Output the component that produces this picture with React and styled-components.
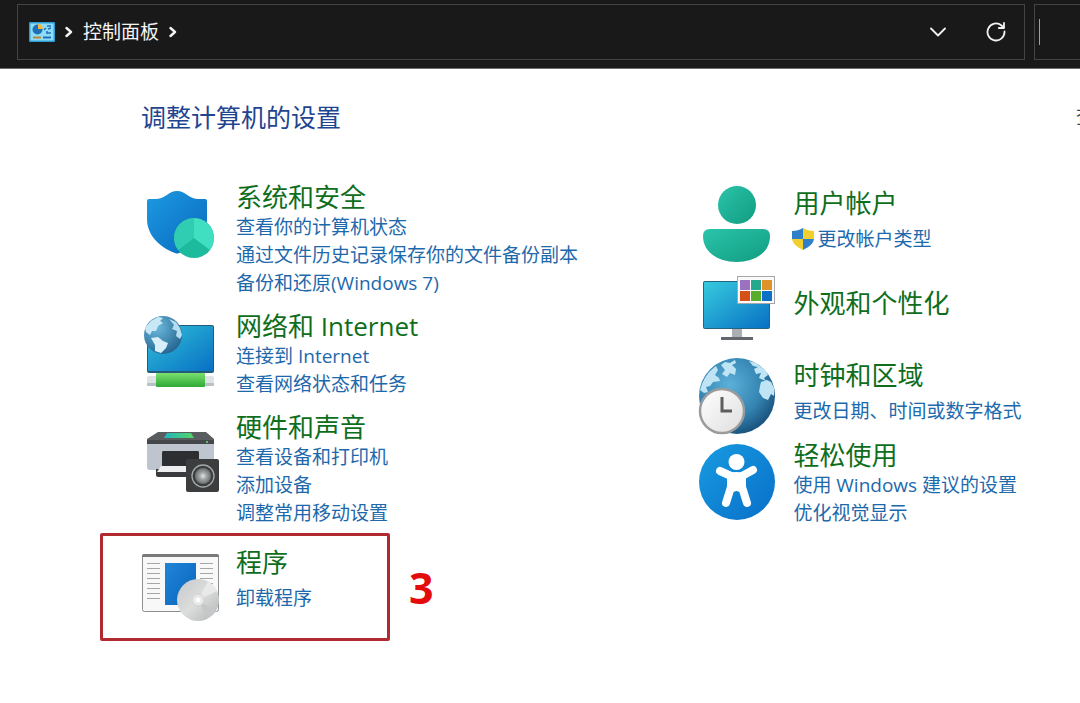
import styled, { createGlobalStyle } from "styled-components";

const App = () => {
  return (
    <>
      <GlobalStyle />
      <TopBar>
        <AddressBar aria-label="地址">
          <PanelIcon />
          <Crumb />
          <CrumbLink href="#panel">控制面板</CrumbLink>
          <Crumb />
          <Spacer />
          <IconButton aria-label="以前的位置">
            <svg width="16" height="16" viewBox="0 0 16 16">
              <path d="M1 4.500L8 11.500L15 4.500" {...whiteStroke} />
            </svg>
          </IconButton>
          <IconButton aria-label="刷新">
            <svg width="20" height="20" viewBox="0 0 20 20">
              <path d="M18.500 9.500A8.500 8.500 0 1 1 15.500 3.500L17.500 5.500" {...whiteStroke} />
              <path d="M18 1V6H12.800" {...whiteStroke} />
            </svg>
          </IconButton>
        </AddressBar>
        <SearchBox>
          <Caret />
          <SearchInput type="text" aria-label="搜索" />
        </SearchBox>
      </TopBar>
      <Main>
        <HeadingRow>
          <Heading>调整计算机的设置</Heading>
          <ViewBy>查看方式:</ViewBy>
        </HeadingRow>
        <Columns>
          <LeftColumn>
            <Category
              icon={<ShieldIcon />}
              title="系统和安全"
              links={[
                "查看你的计算机状态",
                "通过文件历史记录保存你的文件备份副本",
                "备份和还原(Windows 7)",
              ]}
            />
            <Category
              icon={<NetworkIcon />}
              title="网络和 Internet"
              links={["连接到 Internet", "查看网络状态和任务"]}
            />
            <Category
              icon={<PrinterIcon />}
              title="硬件和声音"
              links={["查看设备和打印机", "添加设备", "调整常用移动设置"]}
            />
            <Category icon={<ProgramsIcon />} title="程序" links={["卸载程序"]} $sparse>
              <Highlight />
              <StepNumber>3</StepNumber>
            </Category>
          </LeftColumn>
          <RightColumn>
            <Category
              icon={<UserIcon />}
              title="用户帐户"
              links={["更改帐户类型"]}
              linkIcon={<UacIcon />}
              $sparse
            />
            <Category icon={<DisplayIcon />} title="外观和个性化" links={[]} $sparse />
            <Category
              icon={<ClockIcon />}
              title="时钟和区域"
              links={["更改日期、时间或数字格式"]}
              $sparse
            />
            <Category
              icon={<AccessIcon />}
              title="轻松使用"
              links={["使用 Windows 建议的设置", "优化视觉显示"]}
            />
          </RightColumn>
        </Columns>
      </Main>
    </>
  );
};

export default App;

const Category = ({ icon, title, links, linkIcon, $sparse, children }) => {
  return (
    <CategoryRow>
      <IconCell>{icon}</IconCell>
      <CategoryText $sparse={$sparse}>
        <CategoryTitle>
          <TitleLink href="#category">{title}</TitleLink>
        </CategoryTitle>
        <TaskList $sparse={$sparse}>
          {links.map((text) => (
            <TaskItem key={text}>
              {linkIcon}
              <TaskLink href="#task">{text}</TaskLink>
            </TaskItem>
          ))}
        </TaskList>
      </CategoryText>
      {children}
    </CategoryRow>
  );
};

const whiteStroke = {
  fill: "none",
  stroke: "#f2f2f2",
  strokeWidth: 1.8,
  strokeLinecap: "round",
  strokeLinejoin: "round",
};

const Crumb = () => (
  <CrumbArrow width="8" height="12" viewBox="0 0 8 12" aria-hidden="true">
    <path d="M1.500 2L6 6L1.500 10" {...whiteStroke} strokeWidth="2.4" />
  </CrumbArrow>
);

const PanelIcon = () => (
  <svg width="26" height="20" viewBox="0 0 26 20" aria-hidden="true">
    <rect width="26" height="20" rx="1" fill="#2c9fd6" />
    <rect x="1.500" y="1.500" width="23" height="17" fill="#8fdcf8" />
    <circle cx="8.500" cy="7.500" r="5" fill="#1c70b8" />
    <path d="M9 7V2A5 5 0 0 1 14 7Z" fill="#f4b740" />
    <path d="M15 8L17 6M18 4H22M19 7L22 6M18 11H22M18 9V12" stroke="#1c70b8" strokeWidth="1.500" />
    <path d="M4 15.500H12" stroke="#b98a35" strokeWidth="2" />
    <path d="M14 15.500H22" stroke="#1c70b8" strokeWidth="2" />
  </svg>
);

const ShieldIcon = () => (
  <Picture viewBox="0 0 78 78">
    <defs>
      <linearGradient id="shield" x1="0" y1="0" x2="1" y2="1">
        <stop offset="0" stopColor="#1d9ae2" />
        <stop offset="1" stopColor="#0868bd" />
      </linearGradient>
    </defs>
    <path
      d="M36 6C45 6 47 14 58 14H64Q66 14 66 16V34C66 51 52 63 38 68Q36 69 34 68C20 63 6 51 6 34V16Q6 14 8 14H14C25 14 27 6 36 6Z"
      fill="url(#shield)"
    />
    <circle cx="53" cy="53" r="20" fill="#1cbb9d" />
    <path d="M53 53V33A20 20 0 0 0 37 65Z" fill="#31cdb2" />
    <path d="M53 53V33A20 20 0 0 1 69 65Z" fill="#40dfc2" />
  </Picture>
);

const NetworkIcon = () => (
  <Picture viewBox="0 0 78 78">
    <defs>
      <linearGradient id="netScreen" x1="0" y1="0" x2="1" y2="1">
        <stop offset="0" stopColor="#30c0d8" />
        <stop offset="1" stopColor="#0870c4" />
      </linearGradient>
      <radialGradient id="netGlobe" cx="0.35" cy="0.3" r="0.8">
        <stop offset="0" stopColor="#6bb9dd" />
        <stop offset="1" stopColor="#205f8a" />
      </radialGradient>
      <linearGradient id="cable" x1="0" y1="0" x2="0" y2="1">
        <stop offset="0" stopColor="#7be06e" />
        <stop offset="1" stopColor="#2fa936" />
      </linearGradient>
    </defs>
    <rect x="6" y="11" width="67" height="48" rx="2" fill="#245b7b" />
    <rect x="7" y="12" width="65" height="45" rx="1" fill="url(#netScreen)" />
    <rect x="6" y="62" width="67" height="10" rx="2" fill="#dfe3e6" />
    <rect x="6" y="69" width="67" height="3" rx="1" fill="#b9c0c6" />
    <rect x="15" y="59" width="49" height="14" rx="1" fill="url(#cable)" />
    <circle cx="22" cy="21" r="19" fill="url(#netGlobe)" />
    <path d="M5 18L4 14L10 7L17 3L22 4L19 7L22 9L17 12L15 17L11 17L9 21Z" fill="#c9e8f6" />
    <path d="M10 24L17 23L22 27L27 29L25 34L20 39L14 37L14 31Z" fill="#d8effa" />
    <path d="M28 5L35 8L39 14L41 21L39 25L35 22L36 17L31 15L33 11Z" fill="#b6dcef" />
  </Picture>
);

const PrinterIcon = () => (
  <Picture viewBox="0 0 78 78">
    <defs>
      <linearGradient id="printGlass" x1="0" y1="0" x2="1" y2="0">
        <stop offset="0" stopColor="#23b4be" />
        <stop offset="1" stopColor="#53d665" />
      </linearGradient>
      <radialGradient id="cone" cx="0.5" cy="0.5" r="0.5">
        <stop offset="0" stopColor="#e4e7e8" />
        <stop offset="0.4" stopColor="#a5a9aa" />
        <stop offset="1" stopColor="#6c6e6f" />
      </radialGradient>
    </defs>
    <path d="M6 27H73V52Q73 55 70 55H9Q6 55 6 52Z" fill="#bfc5ce" />
    <path d="M17 17H65L73 24V28H6V24Z" fill="#5a5d60" />
    <path d="M6 25H73V29H6Z" fill="#45484b" />
    <path d="M26 18H50L53 23H23Z" fill="url(#printGlass)" />
    <circle cx="66" cy="27" r="1" fill="#6ee080" />
    <path d="M22 36H57Q58 36 58 38V52H21V38Q21 36 22 36Z" fill="#2c2e31" />
    <path d="M15 54H46V62H17Q15 62 15 60Z" fill="#393b3e" />
    <path d="M20 51H47V57H16Z" fill="#eceef0" />
    <rect x="45" y="44" width="33" height="33" rx="2" fill="#3b3d3f" />
    <circle cx="62" cy="61" r="11" fill="#3b3d3f" stroke="#a4a8aa" strokeWidth="1.300" />
    <circle cx="62" cy="61" r="8" fill="url(#cone)" />
  </Picture>
);

const leftLines = [19, 24, 29, 34, 39, 44, 49, 54];

const ProgramsIcon = () => (
  <Picture viewBox="0 0 78 78">
    <defs>
      <linearGradient id="disc" x1="0" y1="0" x2="1" y2="1">
        <stop offset="0" stopColor="#c6c8c9" />
        <stop offset="0.5" stopColor="#dcdddd" />
        <stop offset="1" stopColor="#b2b4b5" />
      </linearGradient>
      <linearGradient id="page" x1="0" y1="0" x2="1" y2="1">
        <stop offset="0" stopColor="#2085d8" />
        <stop offset="1" stopColor="#0864bb" />
      </linearGradient>
    </defs>
    <rect x="1.500" y="10.500" width="76" height="57" rx="2" fill="#f8f8f8" stroke="#8d8f91" />
    <path d="M1 13V12Q1 10 3 10H76Q78 10 78 12V13Z" fill="#77797b" />
    {leftLines.map((y) => (
      <path key={y} d={`M6 ${y + 0.5}H19`} stroke="#a4a6a8" />
    ))}
    {leftLines.slice(0, 5).map((y) => (
      <path key={y} d={`M59 ${y + 0.5}H72`} stroke="#a4a6a8" />
    ))}
    <rect x="24" y="19" width="31" height="42" fill="url(#page)" />
    <circle cx="57" cy="56" r="21" fill="url(#disc)" />
    <path d="M57 56L67 37.500A21 21 0 0 1 76 47Z" fill="#e9e9e9" />
    <path d="M57 56L75 67A21 21 0 0 1 67 74Z" fill="#c6c7c8" />
    <circle cx="57" cy="56" r="6" fill="#e8e8e8" stroke="#d0d1d2" />
    <circle cx="57" cy="56" r="2.500" fill="#fff" />
  </Picture>
);

const UserIcon = () => (
  <Picture viewBox="0 0 78 78">
    <defs>
      <linearGradient id="user" x1="0" y1="0" x2="1" y2="1">
        <stop offset="0" stopColor="#2ac4ab" />
        <stop offset="1" stopColor="#119c80" />
      </linearGradient>
    </defs>
    <circle cx="39" cy="19" r="19" fill="url(#user)" />
    <path
      d="M12 43H65Q72 43 72 50C72 67 56 76 38.500 76C21 76 5 67 5 50Q5 43 12 43Z"
      fill="url(#user)"
    />
  </Picture>
);

const UacIcon = () => (
  <Shield width="24" height="24" viewBox="0 0 24 24" aria-hidden="true">
    <path d="M12 1C9 3 5 4 1 4V12H12Z" fill="#2f80c8" />
    <path d="M12 1C15 3 19 4 23 4V12H12Z" fill="#f3ce2f" />
    <path d="M1 12H12V23C6 20 2 17 1 12Z" fill="#f3ce2f" />
    <path d="M23 12H12V23C18 20 22 17 23 12Z" fill="#2f80c8" />
  </Shield>
);

const tiles = [
  [42, 8, "#9b72bf"],
  [53, 8, "#25a88e"],
  [64, 8, "#df9228"],
  [42, 19, "#d55017"],
  [53, 19, "#58ad2c"],
  [64, 19, "#0f70c7"],
];

const DisplayIcon = () => (
  <Picture viewBox="0 0 78 78">
    <defs>
      <linearGradient id="screen" x1="0" y1="0" x2="1" y2="1">
        <stop offset="0" stopColor="#36cadd" />
        <stop offset="1" stopColor="#0870c4" />
      </linearGradient>
    </defs>
    <path d="M34 57H44V66H34Z" fill="#a9afb4" />
    <rect x="23" y="65" width="32" height="3" fill="#63686e" />
    <rect x="5" y="9" width="67" height="48" rx="2" fill="#28627f" />
    <rect x="6" y="10" width="65" height="46" rx="1" fill="url(#screen)" />
    <rect x="39.500" y="4.500" width="37" height="27" fill="#fafafa" stroke="#a4a8ac" />
    {tiles.map(([x, y, fill]) => (
      <rect key={fill} x={x} y={y} width="10" height="10" fill={fill} />
    ))}
  </Picture>
);

const ClockIcon = () => (
  <Picture viewBox="0 0 78 78">
    <defs>
      <radialGradient id="globe" cx="0.4" cy="0.35" r="0.7">
        <stop offset="0" stopColor="#5bb0d8" />
        <stop offset="0.6" stopColor="#3585b3" />
        <stop offset="1" stopColor="#164d78" />
      </radialGradient>
      <linearGradient id="face" x1="0" y1="0" x2="1" y2="1">
        <stop offset="0" stopColor="#ffffff" />
        <stop offset="1" stopColor="#dededf" />
      </linearGradient>
    </defs>
    <circle cx="39" cy="38" r="38" fill="url(#globe)" />
    <path
      d="M4 26C7 19 11 13 18 8L20 12L17 17L21 20L22 23L15 24L12 28L8 29L10 34L6 35L2 32Z"
      fill="#bfe5f5"
    />
    <path
      d="M23 7L27 4L32 5L37 2L38 5L34 7L38 11L37 17L32 15L29 19L24 16L27 12Z"
      fill="#bfe5f5"
    />
    <path
      d="M51 3L58 5L67 12L70 17L66 20L68 23L61 20L63 15L58 16L56 11L60 9L55 8Z"
      fill="#bfe5f5"
    />
    <path d="M63 24L69 22L73 24L76 30L76 38L73 36L70 42L65 40L61 34L62 28Z" fill="#bfe5f5" />
    <circle cx="24" cy="53" r="22" fill="url(#face)" stroke="#9a9b9d" strokeWidth="2.500" />
    <path d="M24 39V53H34" fill="none" stroke="#5d5e60" strokeWidth="3" />
  </Picture>
);

const AccessIcon = () => (
  <Picture viewBox="0 0 78 78">
    <defs>
      <linearGradient id="access" x1="0" y1="0" x2="1" y2="1">
        <stop offset="0" stopColor="#189be0" />
        <stop offset="1" stopColor="#086fc9" />
      </linearGradient>
    </defs>
    <circle cx="39" cy="38" r="38" fill="url(#access)" />
    <circle cx="38.500" cy="18" r="8" fill="#fff" />
    <path
      d="M22 27L33 32V43L28 59M55 26L44 32V43L49 59"
      fill="none"
      stroke="#fff"
      strokeWidth="8"
      strokeLinecap="round"
      strokeLinejoin="round"
    />
    <path d="M30 29Q38 27 47 29L48 48H42L38.500 47L35 48H29Z" fill="#fff" />
  </Picture>
);

const GlobalStyle = createGlobalStyle`
  * {
    box-sizing: border-box;
  }

  body {
    margin: 0;
    background: #ffffff;
    font-family: "Open Sans", "Noto Sans CJK SC", sans-serif;
    font-size: 19px;
    overflow-x: hidden;
  }

  a {
    color: inherit;
    text-decoration: none;
  }
`;

const TopBar = styled.header`
  display: flex;
  gap: 9px;
  padding: 4px 0 8px 17px;
  background: #191919;
  border-bottom: 1px solid #6e6e6e;
`;

const AddressBar = styled.nav`
  display: flex;
  flex: 1;
  align-items: center;
  height: 56px;
  padding: 0 9px 0 11px;
  border: 1px solid #444444;
`;

const CrumbArrow = styled.svg`
  margin: 0 10px;
`;

const CrumbLink = styled.a`
  color: #f5f5f5;
  line-height: 28px;
`;

const Spacer = styled.div`
  flex: 1;
`;

const IconButton = styled.button`
  display: flex;
  align-items: center;
  justify-content: center;
  width: 38px;
  height: 38px;
  margin-left: 20px;
  padding: 0;
  border: none;
  background: none;
`;

const SearchBox = styled.div`
  display: flex;
  align-items: center;
  width: 46px;
  padding-left: 4px;
  border: 1px solid #444444;
  border-right: none;
`;

const Caret = styled.div`
  width: 1px;
  height: 26px;
  background: #a0a0a0;
`;

const SearchInput = styled.input`
  flex: 1;
  min-width: 0;
  border: none;
  outline: none;
  background: none;
  color: #f5f5f5;
  font: inherit;
`;

const Main = styled.main`
  padding: 32px 10px 60px 141px;
  overflow: hidden;
`;

const HeadingRow = styled.div`
  display: flex;
  justify-content: space-between;
  align-items: center;
  height: 32px;
  margin-right: -96px;
`;

const Heading = styled.h1`
  margin: 0;
  color: #1f4590;
  font-size: 25px;
  font-weight: 400;
  line-height: 32px;
`;

const ViewBy = styled.span`
  flex: none;
  width: 90px;
  color: #444444;
  line-height: 28px;
  white-space: nowrap;
`;

const Columns = styled.div`
  display: grid;
  grid-template-columns: minmax(0, 3fr) minmax(0, 2fr);
  margin-top: 48px;
`;

const LeftColumn = styled.div`
  display: flex;
  flex-direction: column;
  gap: 13px;
`;

const RightColumn = styled.div`
  display: grid;
  grid-auto-rows: 78px;
  gap: 8px;
  align-content: start;
  align-items: center;
  padding-top: 5px;

  & > section {
    align-items: center;
  }

  & > section > div {
    padding-top: 0;
  }
`;

const CategoryRow = styled.section`
  position: relative;
  display: flex;
  align-items: flex-start;
  gap: 17px;
`;

const IconCell = styled.span`
  flex: none;
  width: 78px;
  height: 78px;

  ${LeftColumn} & {
    margin-top: 4px;
  }
`;

const Picture = styled.svg.attrs({ "aria-hidden": true })`
  display: block;
  width: 78px;
  height: 78px;
`;

const Shield = styled.svg`
  flex: none;
  margin-left: -2px;
`;

const CategoryText = styled.div`
  min-width: 0;
  padding-top: ${({ $sparse }) => ($sparse ? "6px" : "0")};
`;

const CategoryTitle = styled.h2`
  height: 32px;
  margin: 0;
  color: #0f6e1c;
  font-size: 26px;
  font-weight: 400;
  line-height: 32px;
  white-space: nowrap;
`;

const TitleLink = styled.a`
  &:hover {
    text-decoration: underline;
  }
`;

const TaskList = styled.ul`
  margin: 0;
  padding: ${({ $sparse }) => ($sparse ? "6px 0 10px" : "0")};
  list-style: none;
`;

const TaskItem = styled.li`
  display: flex;
  align-items: center;
  gap: 2px;
  height: 28px;
  color: #1d69ac;
  line-height: 28px;
  white-space: nowrap;
`;

const TaskLink = styled.a`
  &:hover {
    text-decoration: underline;
  }
`;

const Highlight = styled.div`
  position: absolute;
  top: -7px;
  left: -41px;
  width: 290px;
  height: 108px;
  border: 3px solid #b02a30;
  border-radius: 2px;
  pointer-events: none;
`;

const StepNumber = styled.strong`
  position: absolute;
  top: 22px;
  left: 268px;
  color: #e30b0b;
  font-family: "Noto Sans", sans-serif;
  font-size: 43px;
  line-height: 52px;
`;
